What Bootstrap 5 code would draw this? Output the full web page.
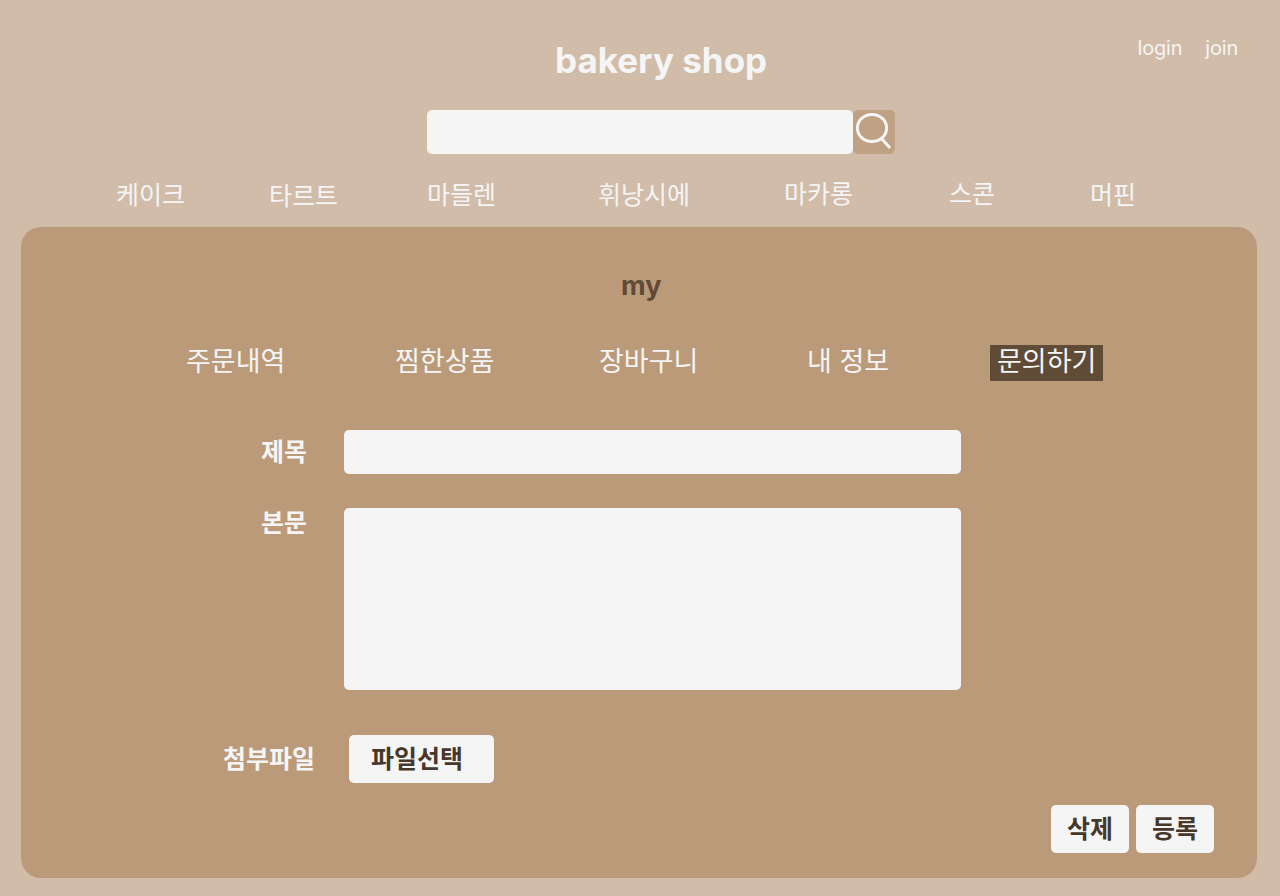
<!DOCTYPE html>
<html lang="ko">
<head>
    <meta charset="UTF-8">
    <meta name="viewport" content="width=device-width, initial-scale=1.0">
    <title>bakery shop</title>
    <link href="https://cdn.jsdelivr.net/npm/bootstrap@5.3.0/dist/css/bootstrap.min.css" rel="stylesheet">
    <style>
        body {
            background: #d1bca9;
            color: #f5f5f5;
            font-family: Inter, "Noto Sans CJK KR", sans-serif;
            height: 896px;
            overflow: hidden;
        }
        a { color: inherit; text-decoration: none; white-space: nowrap; }
        a:hover { color: #5f4b36; }

        /* header */
        .shop-header { height: 110px; padding: 0 42px 0 555px; }
        .shop-title { font-size: 35px; font-weight: 700; line-height: 44px; margin-top: 38px; white-space: nowrap; }
        .user-menu { font-size: 20px; font-weight: 400; letter-spacing: -0.2px; line-height: 24px; padding-top: 36px; gap: 23px; }

        .search-form { width: 468px; margin-left: 427px; height: 44px; }
        .form-control, .form-control:focus { background: #f5f5f5; border: 0; border-radius: 5px; box-shadow: none; }
        .btn-search { width: 42px; flex: none; border: 0; border-radius: 5px; background: #bfa184; }

        .category-nav {
            display: grid;
            grid-template-columns: 153px 158px 171px 186px 165px 141px auto;
            height: 73px;
            padding: 23px 0 0 116px;
            font-size: 25px;
            line-height: 37px;
        }
        .nudge-down { margin-top: 1px; }
        .nudge-up { margin-top: -1px; }

        /* my page */
        .my-panel { width: 1236px; height: 651px; margin-left: 21px; border-radius: 20px; background: #bb9a7a; }
        .my-title { font-size: 27px; font-weight: 700; line-height: 34px; padding: 42px 0 0 600px; color: #5f4b36; }
        .my-nav {
            display: grid;
            grid-template-columns: 209px 204px 208px 183px 113px;
            padding: 42px 0 0 165px;
            font-size: 27px;
            line-height: 34px;
        }
        .my-nav a { height: 36px; }
        .my-nav .active { background: #5f4b36; padding-left: 7px; }

        .inquiry-label { width: 323px; padding-left: 240px; flex: none; font-size: 25px; font-weight: 700; line-height: 36px; }
        .inquiry-label.file-label { width: 328px; padding-left: 202px; }
        .field-title { width: 617px; height: 44px; }
        .field-body { width: 617px; height: 182px; resize: none; }
        .row-title { margin-top: 49px; }
        .row-body { margin-top: 34px; }
        .row-body .inquiry-label { line-height: 30px; }
        .row-file { margin-top: 45px; }
        .btn-shop, .btn-shop:hover {
            height: 48px;
            width: 78px;
            padding: 0;
            border: 0;
            border-radius: 5px;
            background: #f5f5f5;
            color: #46382b;
            font-size: 25px;
            font-weight: 700;
            line-height: 48px;
        }
        .btn-shop.btn-file { width: 145px; text-align: left; padding-left: 22px; }
        .form-actions { margin-top: 22px; padding-right: 43px; gap: 7px; }
    </style>
</head>
<body>
    <header>
        <div class="shop-header d-flex justify-content-between">
            <h1 class="shop-title mb-0"><a href="#">bakery shop</a></h1>
            <div class="user-menu d-flex">
                <a href="#">login</a>
                <a href="#">join</a>
            </div>
        </div>
        <form class="search-form d-flex">
            <input type="search" class="form-control" aria-label="검색">
            <button type="button" class="btn btn-search p-0 d-flex" aria-label="검색">
                <svg width="42" height="44" viewBox="0 0 42 44" fill="none" stroke="#f5f5f5" stroke-width="3">
                    <ellipse cx="19" cy="18" rx="14.6" ry="13.6"/>
                    <path d="M28.5 28.5L37 38"/>
                </svg>
            </button>
        </form>
        <nav class="category-nav">
            <a href="#">케이크</a>
            <a href="#" class="nudge-down">타르트</a>
            <a href="#">마들렌</a>
            <a href="#">휘낭시에</a>
            <a href="#" class="nudge-up">마카롱</a>
            <a href="#" class="nudge-up">스콘</a>
            <a href="#">머핀</a>
        </nav>
    </header>

    <main class="my-panel">
        <h2 class="my-title mb-0">my</h2>
        <nav class="my-nav">
            <a href="#">주문내역</a>
            <a href="#">찜한상품</a>
            <a href="#">장바구니</a>
            <a href="#">내 정보</a>
            <a href="#" class="active">문의하기</a>
        </nav>
        <form>
            <div class="row-title d-flex">
                <label class="inquiry-label pt-1" for="title">제목</label>
                <input type="text" id="title" class="form-control field-title">
            </div>
            <div class="row-body d-flex">
                <label class="inquiry-label" for="content">본문</label>
                <textarea id="content" class="form-control field-body"></textarea>
            </div>
            <div class="row-file d-flex align-items-center">
                <span class="inquiry-label file-label">첨부파일</span>
                <button type="button" class="btn btn-shop btn-file">파일선택</button>
            </div>
            <div class="form-actions d-flex justify-content-end">
                <button type="button" class="btn btn-shop">삭제</button>
                <button type="button" class="btn btn-shop">등록</button>
            </div>
        </form>
    </main>

    <script src="https://cdn.jsdelivr.net/npm/bootstrap@5.3.0/dist/js/bootstrap.bundle.min.js"></script>
</body>
</html>
